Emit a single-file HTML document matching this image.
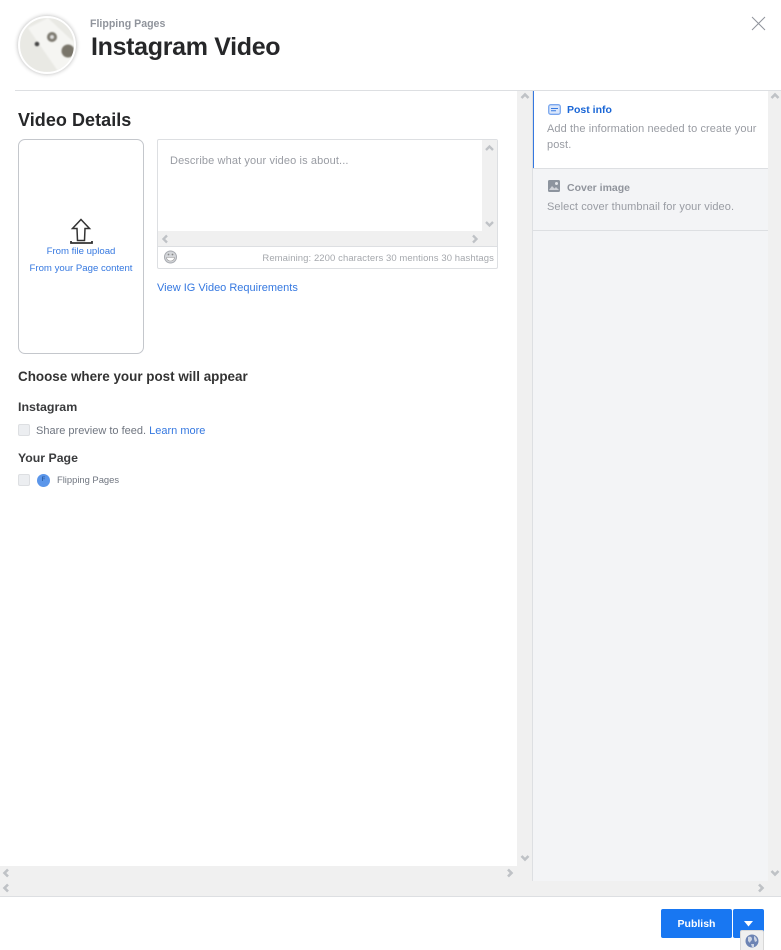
<!DOCTYPE html>
<html><head><meta charset="utf-8"><style>
html,body{margin:0;padding:0;width:781px;height:950px;overflow:hidden;background:#fff}
body{position:relative;font-family:"Liberation Sans",sans-serif}
.a{position:absolute;white-space:nowrap}
svg{position:absolute;display:block}
.l{color:#3578e0}
.g{color:#999ca3}
.chev{fill:none;stroke:#bfc2c6;stroke-width:2.6}
</style></head><body>
<!-- header -->
<div class="a" style="left:18px;top:16px;width:54px;height:54px;border:2px solid #fff;border-radius:50%;box-shadow:0 0 4px rgba(0,0,0,.3);overflow:hidden;background:#eee">
<svg width="54" height="54" viewBox="0 0 54 54" style="filter:blur(.9px)"><rect width="54" height="54" fill="#e9e9e4"/><path d="M8 10 L28 0 L60 30 L40 56 Z" fill="#f5f5f2"/><circle cx="17" cy="26" r="2.300" fill="#444"/><circle cx="32" cy="19" r="5" fill="#7d7a70"/><circle cx="32" cy="19" r="2" fill="#ddd"/><circle cx="48" cy="33" r="6.500" fill="#79756a"/></svg></div>
<div class="a" style="left:90px;top:18px;font-size:10.600px;font-weight:bold;color:#90949c;line-height:13px">Flipping Pages</div>
<div class="a" style="left:91px;top:31px;font-size:25px;font-weight:bold;color:#262729;line-height:32px;letter-spacing:-.32px">Instagram Video</div>
<svg style="left:751px;top:16px" width="15" height="15"><path d="M1 1L14 14M14 1L1 14" stroke="#90949c" stroke-width="1" fill="none"/></svg>
<div class="a" style="left:15px;top:90px;width:766px;height:1px;background:#dddfe2"></div>

<!-- scrollbars & panels -->
<div class="a" style="left:517px;top:91px;width:15px;height:775px;background:#f0f0f0"></div>
<div class="a" style="left:532px;top:91px;width:1px;height:790px;background:#dddfe2"></div>
<div class="a" style="left:533px;top:91px;width:235px;height:790px;background:#f3f4f6"></div>
<div class="a" style="left:768px;top:91px;width:13px;height:790px;background:#f0f0f0"></div>
<div class="a" style="left:0;top:866px;width:532px;height:15px;background:#f0f0f0"></div>
<div class="a" style="left:0;top:881px;width:781px;height:15px;background:#f0f0f0"></div>
<div class="a" style="left:0;top:896px;width:781px;height:1px;background:#dddfe2"></div>
<svg style="left:0;top:0" width="781" height="950">
<g class="chev">
<path d="M521.500 98l3.500-3.500 3.500 3.500"/><path d="M521.500 856l3.500 3.500 3.500-3.500"/>
<path d="M771.500 98l3.500-3.500 3.500 3.500"/><path d="M771.500 871l3.500 3.500 3.500-3.500"/>
<path d="M8 869.500l-3.500 3.500 3.500 3.500"/><path d="M8 884.500l-3.500 3.500 3.500 3.500"/>
<path d="M508 869.500l3.500 3.500-3.500 3.500"/><path d="M759 884.500l3.500 3.500-3.500 3.500"/>
</g></svg>

<!-- right tabs -->
<div class="a" style="left:533px;top:91px;width:234px;height:77px;background:#fff;border-left:1px solid #3578e0"></div>
<div class="a" style="left:533px;top:168px;width:235px;height:1px;background:#dddfe2"></div>
<div class="a" style="left:533px;top:230px;width:235px;height:1px;background:#dddfe2"></div>
<svg style="left:548px;top:104px" width="13" height="11"><rect x=".7" y=".7" width="11.600" height="9.600" rx="2" fill="#dbe7fb" stroke="#7aa7ee" stroke-width="1.300"/><path d="M3 4.500h7M3 6.800h5" stroke="#3578e0"/></svg>
<div class="a" style="left:567px;top:104px;font-size:10.500px;font-weight:bold;color:#1a66d6;line-height:13px">Post info</div>
<div class="a g" style="left:547px;top:121px;font-size:11px;line-height:16px;white-space:normal;width:218px;letter-spacing:.1px">Add the information needed to create your post.</div>
<svg style="left:548px;top:180px" width="12" height="12"><rect width="12" height="12" rx="1.500" fill="#8d949e"/><circle cx="8.500" cy="3.500" r="1.500" fill="#e4e6ea"/><path d="M1 10l3-4 2.500 2.500L8 7l3 3z" fill="#d0d3d8"/></svg>
<div class="a" style="left:567px;top:182px;font-size:10.500px;font-weight:bold;color:#90949c;line-height:13px">Cover image</div>
<div class="a g" style="left:547px;top:200px;font-size:11px;line-height:15px;letter-spacing:.08px">Select cover thumbnail for your video.</div>

<!-- left -->
<div class="a" style="left:18px;top:109px;font-size:18px;font-weight:bold;color:#262729;line-height:23px;letter-spacing:.05px">Video Details</div>
<div class="a" style="left:18px;top:139px;width:124px;height:213px;border:1px solid #c4c7cc;border-radius:7px"></div>
<svg style="left:70px;top:218px" width="23" height="27" viewBox="0 0 23 27"><path d="M11 1.500L19.500 10.500H15L14.500 22.500H7.500L7 10.500H2.500Z" fill="none" stroke="#333" stroke-width="1.500"/><path d="M1 23V25H22V23" fill="none" stroke="#333" stroke-width="1.800"/></svg>
<div class="a l" style="left:18px;width:126px;text-align:center;top:245px;font-size:9.600px;line-height:13px">From file upload</div>
<div class="a l" style="left:18px;width:126px;text-align:center;top:262px;font-size:9.600px;line-height:13px">From your Page content</div>

<div class="a" style="left:157px;top:139px;width:339px;height:128px;border:1px solid #dddfe2;border-radius:2px;overflow:hidden">
 <div class="a" style="left:324px;top:0;width:15px;height:91px;background:#f0f0f0"></div>
 <div class="a" style="left:0;top:91px;width:339px;height:15px;background:#f0f0f0"></div>
 <div class="a" style="left:0;top:106px;width:339px;height:1px;background:#dddfe2"></div>
</div>
<svg style="left:0;top:0" width="781" height="950"><g class="chev" style="stroke-width:2.300">
<path d="M486 150l3.500-3.500 3.500 3.500"/><path d="M486 222l3.500 3.500 3.500-3.500"/><path d="M167 235.500l-3.500 3.500 3.500 3.500"/><path d="M473 235.500l3.500 3.500-3.500 3.500"/></g>
<circle cx="170.500" cy="257" r="6" fill="#d4d6da" stroke="#a8abb0"/><path d="M166.500 257.500h8a4 3.500 0 0 1-8 0z" fill="#fff" stroke="#999" stroke-width=".6"/><circle cx="168.500" cy="254.500" r=".9" fill="#888"/><circle cx="172.500" cy="254.500" r=".9" fill="#888"/></svg>
<div class="a g" style="left:170px;top:155px;font-size:11px;line-height:13px;letter-spacing:.12px">Describe what your video is about...</div>
<div class="a" style="right:287px;top:252px;font-size:9.500px;line-height:13px;color:#a5a8ad;letter-spacing:.08px">Remaining: 2200 characters 30 mentions 30 hashtags</div>
<div class="a l" style="left:157px;top:281px;font-size:11px;line-height:14px">View IG Video Requirements</div>

<div class="a" style="left:18px;top:368px;font-size:13.430px;font-weight:bold;color:#333;line-height:17px">Choose where your post will appear</div>
<div class="a" style="left:18px;top:399px;font-size:12.400px;font-weight:bold;color:#3a3b3d;line-height:16px">Instagram</div>
<div class="a" style="left:18px;top:424px;width:10px;height:10px;background:#eceef1;border:1px solid #dddfe2;border-radius:2px"></div>
<div class="a" style="left:36px;top:424px;font-size:11px;line-height:14px;color:#707680">Share preview to feed. <span class="l">Learn more</span></div>
<div class="a" style="left:18px;top:450px;font-size:12.300px;font-weight:bold;color:#3a3b3d;line-height:16px">Your Page</div>
<div class="a" style="left:18px;top:474px;width:10px;height:10px;background:#eceef1;border:1px solid #dddfe2;border-radius:2px"></div>
<div class="a" style="left:37px;top:474px;width:13px;height:13px;border-radius:50%;background:#5b96ea;color:#2c5fa8;font-size:6px;font-weight:bold;line-height:13px;text-align:center">F</div>
<div class="a" style="left:57px;top:473px;font-size:9.400px;line-height:13px;color:#707680">Flipping Pages</div>

<!-- footer -->
<div class="a" style="left:661px;top:909px;width:71px;height:29px;background:#1877f2;border-radius:2px;color:#fff;font-size:10.500px;font-weight:bold;line-height:30px;text-align:center">Publish</div>
<div class="a" style="left:733px;top:909px;width:31px;height:29px;background:#1877f2;border-radius:2px"></div>
<svg style="left:743px;top:921px" width="11" height="6"><path d="M1 0h9L5.500 5.500z" fill="#fff"/></svg>
<div class="a" style="left:740px;top:930px;width:24px;height:20px;background:#f0f0f0;border:1px solid #d8d8d8;box-sizing:border-box;border-bottom:0;border-radius:2px 2px 0 0"></div>
<svg style="left:745px;top:934px" width="14" height="14"><circle cx="7" cy="7" r="6.500" fill="#6d84b4"/><path d="M3 3c2-1 4 0 4 2s-2 2-2 4l-2-2zM9 2c2 1 3 3 3 5l-2 1-1-3zM6 10l3 0 0 3-2 0z" fill="#cdd5e4"/></svg>
</body></html>
